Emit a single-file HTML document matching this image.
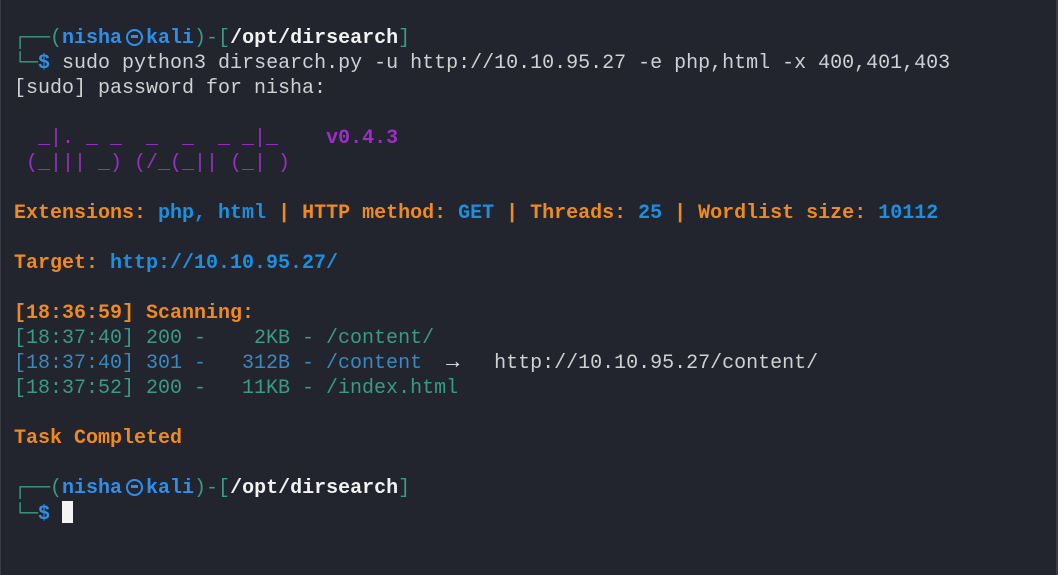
<!DOCTYPE html>
<html><head><meta charset="utf-8"><style>
html,body{margin:0;padding:0;background:#23252e;}
body{width:1058px;height:575px;overflow:hidden;position:relative;box-sizing:border-box;border-left:1px solid #3a3c45;border-right:2px solid #3a3c45;}
pre{position:absolute;left:13px;top:26px;margin:0;font-family:"Liberation Mono","DejaVu Sans Mono",monospace;font-size:20px;line-height:25px;color:#d0d0d0;}
.t{color:#3a9a86}.bl{color:#2f8fe8;font-weight:bold}.w{color:#f2f2f2;font-weight:bold}
.o{color:#f08a1e;font-weight:bold}.v{color:#1b8fe0;font-weight:bold}.p{color:#9a2fc5}.pb{color:#9a2fc5;font-weight:bold}
.g{color:#3a9a86}.b2{color:#3a88c0}
.at{display:inline-block;width:24px;height:14px;position:relative;vertical-align:-1px}
.at::before{content:"";position:absolute;left:4px;top:-1px;width:13px;height:13px;border:2px solid #2f8fe8;border-radius:50%}
.at::after{content:"";position:absolute;left:9px;top:5px;width:7px;height:3px;background:#2f8fe8}
.ar{display:inline-block;width:12px;font-size:22px;color:#e8e8e8;line-height:20px}
.cur{display:inline-block;width:11px;height:22px;background:#f4f4f4;vertical-align:-4px}
</style></head><body>
<pre><span class="t">┌──(</span><span class="bl">nisha<span class="at"></span>kali</span><span class="t">)-[</span><span class="w">/opt/dirsearch</span><span class="t">]</span>
<span class="t">└─</span><span class="bl">$</span> sudo python3 dirsearch.py -u http://10.10.95.27 -e php,html -x 400,401,403
[sudo] password for nisha:

<span class="p">  _|. _ _  _  _  _ _|_    </span><span class="pb">v0.4.3</span>
<span class="p"> (_||| _) (/_(_|| (_| )</span>

<span class="o">Extensions: </span><span class="v">php, html</span><span class="o"> | HTTP method: </span><span class="v">GET</span><span class="o"> | Threads: </span><span class="v">25</span><span class="o"> | Wordlist size: </span><span class="v">10112</span>

<span class="o">Target: </span><span class="v">http://10.10.95.27/</span>

<span class="o">[18:36:59] Scanning: </span>
<span class="g">[18:37:40] 200 -    2KB - /content/</span>
<span class="b2">[18:37:40] 301 -   312B - /content</span>  <span class="ar">→</span>   http://10.10.95.27/content/
<span class="g">[18:37:52] 200 -   11KB - /index.html</span>

<span class="o">Task Completed</span>

<span class="t">┌──(</span><span class="bl">nisha<span class="at"></span>kali</span><span class="t">)-[</span><span class="w">/opt/dirsearch</span><span class="t">]</span>
<span class="t">└─</span><span class="bl">$</span> <span class="cur"></span></pre>
</body></html>
